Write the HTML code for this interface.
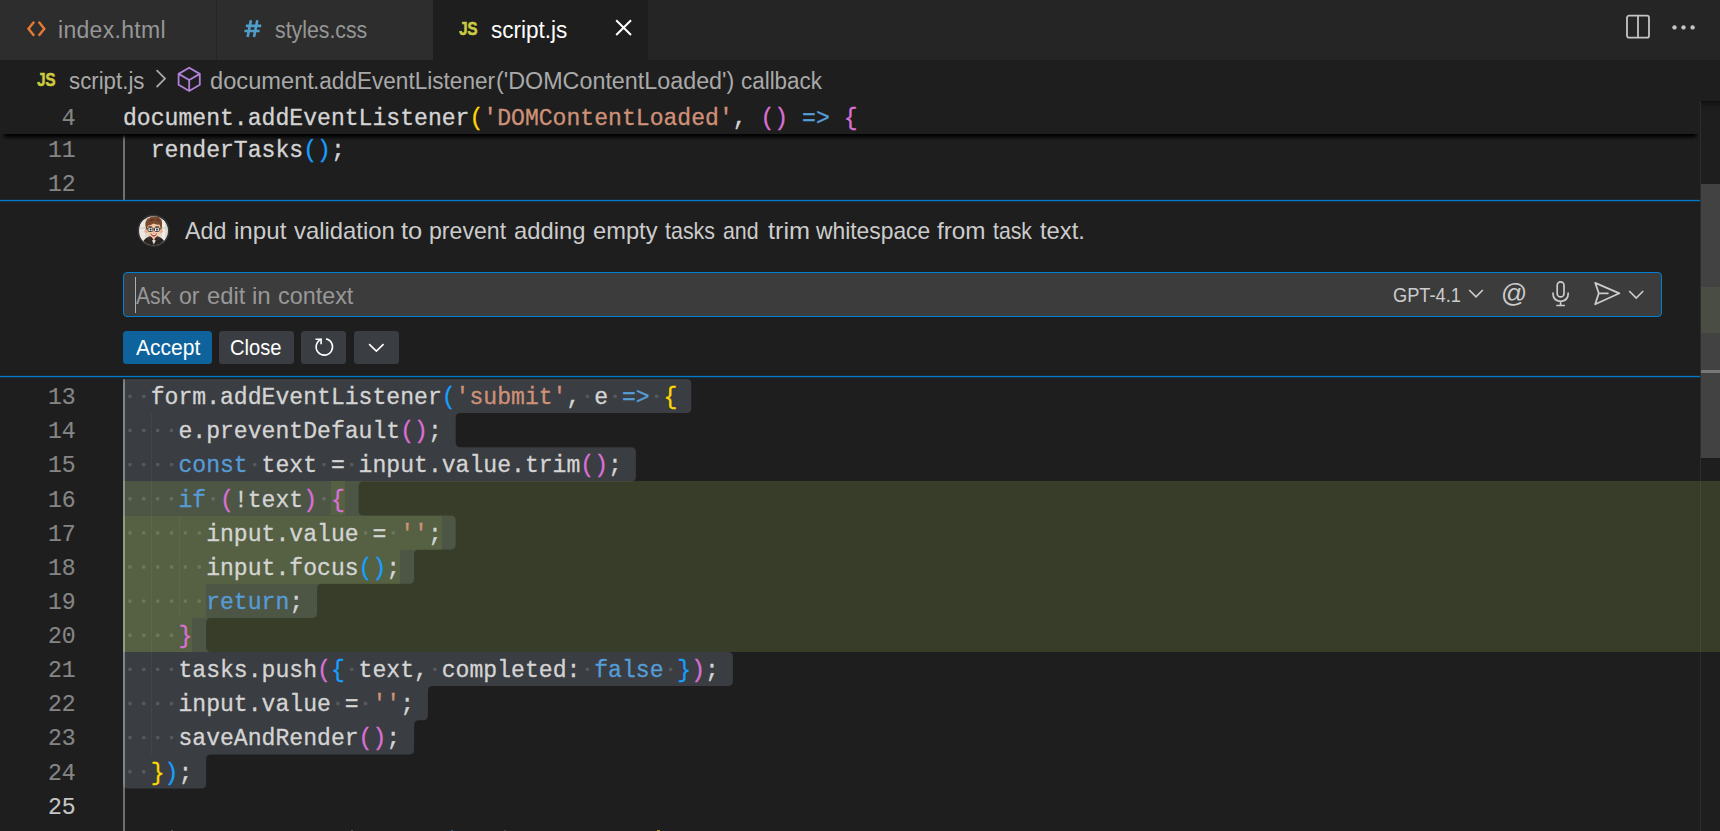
<!DOCTYPE html>
<html><head><meta charset="utf-8"><title>script.js</title>
<style>
*{box-sizing:border-box;margin:0;padding:0}
html,body{width:1720px;height:831px;overflow:hidden;background:#1e1e1e}
body{position:relative;font-family:"Liberation Sans",sans-serif;color:#ccc}
.abs{position:absolute}
/* tabs */
#tabbar{position:absolute;left:0;top:0;width:1720px;height:60px;background:#252526}
.tab{position:absolute;top:0;height:60px;background:#2d2d2d}
.tab .lbl{position:absolute;top:17px;font-size:23px;line-height:26px;color:#969696;white-space:nowrap}
#t1{left:0;width:216px}
#t2{left:217px;width:216px}
#t3{left:433px;width:215px;background:#1e1e1e}
#t3 .lbl{color:#fff}
.jsico{position:absolute;font-weight:bold;font-size:18.5px;line-height:20px;color:#cbcb41;-webkit-text-stroke:0.45px #cbcb41;transform:scaleX(0.84);transform-origin:0 0;letter-spacing:-0.5px}
.ui{font-size:23.2px;line-height:26px;white-space:nowrap}
.btn{top:131px;height:33px;border-radius:3.5px;background:#3a3d41}
/* breadcrumb */
#crumb{position:absolute;left:0;top:60px;width:1720px;height:40px;background:#1e1e1e}
#crumb .lbl{position:absolute;top:7.8px;font-size:23px;line-height:26px;color:#a9a9a9;white-space:nowrap}
/* editor */
.cl{position:absolute;left:123px;height:34.125px;line-height:34.125px;font-family:"Liberation Mono",monospace;font-size:23.1px;white-space:pre;color:#d4d4d4;padding-top:2.2px;-webkit-text-stroke:0.3px currentColor}
.ln{position:absolute;left:0;width:75.6px;text-align:right;height:34.125px;line-height:34.125px;font-family:"Liberation Mono",monospace;font-size:23.1px;color:#858585;padding-top:2.2px;-webkit-text-stroke:0.15px currentColor}
.ln.act{color:#c6c6c6}
#sticky{position:absolute;left:0;top:100px;width:1700px;height:34px;background:#1e1e1e;box-shadow:0 7px 3.5px -3.5px #000}
#zone{position:absolute;left:0;top:200px;width:1700px;height:178px;background:#1e1e1e}
</style></head>
<body>
<!-- editor lines above zone -->
<div id="upper" class="abs" style="left:0;top:100px;width:1700px;height:100px;overflow:hidden">
 <div class="abs" style="left:0;top:-100px;width:1700px;height:300px">
  <div class="ln" style="top:131.75px">11</div><div class="ln" style="top:165.88px">12</div><div class="cl" style="top:131.75px"><span style="color:#d4d4d4">  renderTasks</span><span style="color:#179fff">()</span><span style="color:#d4d4d4">;</span></div><div class="cl" style="top:165.88px"></div>
 </div>
</div>
<div class="abs" style="left:123px;top:134px;width:2px;height:66px;background:#707070"></div>

<!-- lower editor -->
<div id="lower" class="abs" style="left:0;top:377px;width:1720px;height:454px;overflow:hidden">
 <div class="abs" style="left:0;top:-377px;width:1720px;height:900px">
  <svg class="abs" style="left:0;top:0" width="1720" height="900"><path d="M123.00 384.00 Q123.00 379.00 128.00 379.00 L686.34 379.00 Q691.34 379.00 691.34 384.00 L691.34 408.12 Q691.34 413.12 686.34 413.12 L460.69 413.12 Q455.69 413.12 455.69 418.12 L455.69 442.25 Q455.69 447.25 460.69 447.25 L630.89 447.25 Q635.89 447.25 635.89 452.25 L635.89 476.38 Q635.89 481.38 630.89 481.38 L363.65 481.38 Q358.65 481.38 358.65 486.38 L358.65 510.50 Q358.65 515.50 363.65 515.50 L450.69 515.50 Q455.69 515.50 455.69 520.50 L455.69 544.62 Q455.69 549.62 450.69 549.62 L419.10 549.62 Q414.10 549.62 414.10 554.62 L414.10 578.75 Q414.10 583.75 409.10 583.75 L322.07 583.75 Q317.07 583.75 317.07 588.75 L317.07 612.88 Q317.07 617.88 312.07 617.88 L211.17 617.88 Q206.17 617.88 206.17 622.88 L206.17 647.00 Q206.17 652.00 211.17 652.00 L727.93 652.00 Q732.93 652.00 732.93 657.00 L732.93 681.12 Q732.93 686.12 727.93 686.12 L432.96 686.12 Q427.96 686.12 427.96 691.12 L427.96 715.25 Q427.96 720.25 422.96 720.25 L419.10 720.25 Q414.10 720.25 414.10 725.25 L414.10 749.38 Q414.10 754.38 409.10 754.38 L211.17 754.38 Q206.17 754.38 206.17 759.38 L206.17 783.50 Q206.17 788.50 201.17 788.50 L128.00 788.50 Q123.00 788.50 123.00 783.50 Z" fill="#3a3d41"/></svg>
  <div class="abs" style="left:123px;top:481.375px;width:1597px;height:170.625px;background:rgba(155,185,85,0.2)"></div>
  <div class="abs" style="left:330.93px;top:481.38px;width:13.86px;height:34.12px;background:rgba(156,204,44,0.11)"></div><div class="abs" style="left:123.00px;top:515.50px;width:318.83px;height:34.12px;background:rgba(156,204,44,0.11)"></div><div class="abs" style="left:123.00px;top:549.62px;width:277.24px;height:34.12px;background:rgba(156,204,44,0.11)"></div><div class="abs" style="left:123.00px;top:583.75px;width:83.17px;height:34.12px;background:rgba(156,204,44,0.11)"></div><div class="abs" style="left:123.00px;top:617.88px;width:69.31px;height:34.12px;background:rgba(156,204,44,0.11)"></div><div class="abs" style="left:151.32px;top:413.12px;width:1px;height:341.25px;background:rgba(255,255,255,0.045)"></div><div class="abs" style="left:179.05px;top:515.50px;width:1px;height:102.38px;background:rgba(255,255,255,0.045)"></div><svg class="abs" style="left:0;top:0" width="1720" height="900" fill="rgba(227,228,226,0.17)"><circle cx="129.93" cy="396.36" r="1.9"/><circle cx="143.79" cy="396.36" r="1.9"/><circle cx="587.38" cy="396.36" r="1.9"/><circle cx="615.10" cy="396.36" r="1.9"/><circle cx="656.69" cy="396.36" r="1.9"/><circle cx="129.93" cy="430.49" r="1.9"/><circle cx="143.79" cy="430.49" r="1.9"/><circle cx="157.66" cy="430.49" r="1.9"/><circle cx="171.52" cy="430.49" r="1.9"/><circle cx="129.93" cy="464.61" r="1.9"/><circle cx="143.79" cy="464.61" r="1.9"/><circle cx="157.66" cy="464.61" r="1.9"/><circle cx="171.52" cy="464.61" r="1.9"/><circle cx="254.69" cy="464.61" r="1.9"/><circle cx="324.00" cy="464.61" r="1.9"/><circle cx="351.72" cy="464.61" r="1.9"/><circle cx="129.93" cy="498.74" r="1.9"/><circle cx="143.79" cy="498.74" r="1.9"/><circle cx="157.66" cy="498.74" r="1.9"/><circle cx="171.52" cy="498.74" r="1.9"/><circle cx="213.10" cy="498.74" r="1.9"/><circle cx="324.00" cy="498.74" r="1.9"/><circle cx="129.93" cy="532.86" r="1.9"/><circle cx="143.79" cy="532.86" r="1.9"/><circle cx="157.66" cy="532.86" r="1.9"/><circle cx="171.52" cy="532.86" r="1.9"/><circle cx="185.38" cy="532.86" r="1.9"/><circle cx="199.24" cy="532.86" r="1.9"/><circle cx="365.59" cy="532.86" r="1.9"/><circle cx="393.31" cy="532.86" r="1.9"/><circle cx="129.93" cy="566.99" r="1.9"/><circle cx="143.79" cy="566.99" r="1.9"/><circle cx="157.66" cy="566.99" r="1.9"/><circle cx="171.52" cy="566.99" r="1.9"/><circle cx="185.38" cy="566.99" r="1.9"/><circle cx="199.24" cy="566.99" r="1.9"/><circle cx="129.93" cy="601.11" r="1.9"/><circle cx="143.79" cy="601.11" r="1.9"/><circle cx="157.66" cy="601.11" r="1.9"/><circle cx="171.52" cy="601.11" r="1.9"/><circle cx="185.38" cy="601.11" r="1.9"/><circle cx="199.24" cy="601.11" r="1.9"/><circle cx="129.93" cy="635.24" r="1.9"/><circle cx="143.79" cy="635.24" r="1.9"/><circle cx="157.66" cy="635.24" r="1.9"/><circle cx="171.52" cy="635.24" r="1.9"/><circle cx="129.93" cy="669.36" r="1.9"/><circle cx="143.79" cy="669.36" r="1.9"/><circle cx="157.66" cy="669.36" r="1.9"/><circle cx="171.52" cy="669.36" r="1.9"/><circle cx="351.72" cy="669.36" r="1.9"/><circle cx="434.89" cy="669.36" r="1.9"/><circle cx="587.38" cy="669.36" r="1.9"/><circle cx="670.55" cy="669.36" r="1.9"/><circle cx="129.93" cy="703.49" r="1.9"/><circle cx="143.79" cy="703.49" r="1.9"/><circle cx="157.66" cy="703.49" r="1.9"/><circle cx="171.52" cy="703.49" r="1.9"/><circle cx="337.86" cy="703.49" r="1.9"/><circle cx="365.59" cy="703.49" r="1.9"/><circle cx="129.93" cy="737.61" r="1.9"/><circle cx="143.79" cy="737.61" r="1.9"/><circle cx="157.66" cy="737.61" r="1.9"/><circle cx="171.52" cy="737.61" r="1.9"/><circle cx="129.93" cy="771.74" r="1.9"/><circle cx="143.79" cy="771.74" r="1.9"/></svg>
  <div class="abs" style="left:123px;top:379px;width:2px;height:460px;background:rgba(255,255,255,0.36)"></div>
  <div class="ln" style="top:379.00px">13</div><div class="ln" style="top:413.12px">14</div><div class="ln" style="top:447.25px">15</div><div class="ln" style="top:481.38px">16</div><div class="ln" style="top:515.50px">17</div><div class="ln" style="top:549.62px">18</div><div class="ln" style="top:583.75px">19</div><div class="ln" style="top:617.88px">20</div><div class="ln" style="top:652.00px">21</div><div class="ln" style="top:686.12px">22</div><div class="ln" style="top:720.25px">23</div><div class="ln" style="top:754.38px">24</div><div class="ln act" style="top:788.50px">25</div><div class="cl" style="top:379.00px"><span style="color:#d4d4d4">  form.addEventListener</span><span style="color:#179fff">(</span><span style="color:#ce9178">'submit'</span><span style="color:#d4d4d4">, e </span><span style="color:#569cd6">=&gt;</span><span style="color:#d4d4d4"> </span><span style="color:#ffd700">{</span></div><div class="cl" style="top:413.12px"><span style="color:#d4d4d4">    e.preventDefault</span><span style="color:#da70d6">()</span><span style="color:#d4d4d4">;</span></div><div class="cl" style="top:447.25px"><span style="color:#d4d4d4">    </span><span style="color:#569cd6">const</span><span style="color:#d4d4d4"> text = input.value.trim</span><span style="color:#da70d6">()</span><span style="color:#d4d4d4">;</span></div><div class="cl" style="top:481.38px"><span style="color:#d4d4d4">    </span><span style="color:#569cd6">if</span><span style="color:#d4d4d4"> </span><span style="color:#da70d6">(</span><span style="color:#d4d4d4">!text</span><span style="color:#da70d6">)</span><span style="color:#d4d4d4"> </span><span style="color:#da70d6">{</span></div><div class="cl" style="top:515.50px"><span style="color:#d4d4d4">      input.value = </span><span style="color:#ce9178">''</span><span style="color:#d4d4d4">;</span></div><div class="cl" style="top:549.62px"><span style="color:#d4d4d4">      input.focus</span><span style="color:#179fff">()</span><span style="color:#d4d4d4">;</span></div><div class="cl" style="top:583.75px"><span style="color:#d4d4d4">      </span><span style="color:#569cd6">return</span><span style="color:#d4d4d4">;</span></div><div class="cl" style="top:617.88px"><span style="color:#d4d4d4">    </span><span style="color:#da70d6">}</span></div><div class="cl" style="top:652.00px"><span style="color:#d4d4d4">    tasks.push</span><span style="color:#da70d6">(</span><span style="color:#179fff">{</span><span style="color:#d4d4d4"> text, completed: </span><span style="color:#569cd6">false</span><span style="color:#d4d4d4"> </span><span style="color:#179fff">}</span><span style="color:#da70d6">)</span><span style="color:#d4d4d4">;</span></div><div class="cl" style="top:686.12px"><span style="color:#d4d4d4">    input.value = </span><span style="color:#ce9178">''</span><span style="color:#d4d4d4">;</span></div><div class="cl" style="top:720.25px"><span style="color:#d4d4d4">    saveAndRender</span><span style="color:#da70d6">()</span><span style="color:#d4d4d4">;</span></div><div class="cl" style="top:754.38px"><span style="color:#d4d4d4">  </span><span style="color:#ffd700">}</span><span style="color:#179fff">)</span><span style="color:#d4d4d4">;</span></div><div class="cl" style="top:788.50px"></div>
  <div class="abs" style="left:170.6px;top:830px;width:2px;height:1px;background:rgba(212,212,212,0.28)"></div><div class="abs" style="left:350.7px;top:830px;width:2px;height:1px;background:rgba(212,212,212,0.28)"></div><div class="abs" style="left:504.2px;top:830px;width:2px;height:1px;background:rgba(212,212,212,0.22)"></div><div class="abs" style="left:450.6px;top:829.5px;width:2px;height:1.5px;background:rgba(23,159,255,0.6)"></div><div class="abs" style="left:657.2px;top:829.5px;width:3px;height:1.5px;background:rgba(255,215,0,0.6)"></div>
 </div>
</div>

<!-- sticky -->
<div id="sticky">
 <div class="abs" style="left:0;top:-100px;width:1700px;height:200px"><div class="ln" style="top:100.00px">4</div><div class="cl" style="top:100.00px"><span style="color:#d4d4d4">document.addEventListener</span><span style="color:#ffd700">(</span><span style="color:#ce9178">'DOMContentLoaded'</span><span style="color:#d4d4d4">, </span><span style="color:#da70d6">()</span><span style="color:#d4d4d4"> </span><span style="color:#569cd6">=&gt;</span><span style="color:#d4d4d4"> </span><span style="color:#da70d6">{</span></div></div>
</div>

<!-- zone -->
<div id="zone">
 <div class="abs" style="left:0;top:-1px;width:1700px;height:1px;background:rgba(0,122,204,0.12)"></div>
 <div class="abs" style="left:0;top:0;width:1700px;height:1px;background:#007acc"></div>
 <div class="abs" style="left:0;top:1px;width:1700px;height:1px;background:rgba(0,122,204,0.22)"></div>
 <div class="abs" style="left:0;top:175px;width:1700px;height:1px;background:rgba(0,122,204,0.12)"></div>
 <div class="abs" style="left:0;top:176px;width:1700px;height:1px;background:#007acc"></div>
 <div class="abs" style="left:0;top:177px;width:1700px;height:1px;background:rgba(0,122,204,0.22)"></div>
 <!-- avatar -->
 <svg class="abs" style="left:137px;top:14px" width="34" height="34" viewBox="0 0 34 34">
  <defs><clipPath id="avc"><circle cx="16.5" cy="16.7" r="14.5"/></clipPath></defs>
  <circle cx="16.5" cy="16.7" r="16.1" fill="#353535"/>
  <g clip-path="url(#avc)">
   <rect x="0" y="0" width="34" height="34" fill="#dedbd1"/>
   <rect x="3" y="0" width="5" height="34" fill="#ebe9e1"/><rect x="25" y="0" width="3" height="34" fill="#efede6"/><rect x="0" y="13.5" width="34" height="1.2" fill="#cfccc2"/>
   <path d="M4.5 33 Q5.5 24.5 12 23 L14.5 21.6 L19 21.6 L21.6 23 Q28 24.5 29 33 Z" fill="#2a221f"/>
   <path d="M9.5 24.5 Q12 21.6 14.4 22.4 L13 27 Z M24 24.5 Q21.4 21.6 19 22.4 L20.4 27 Z" fill="#3a302b"/>
   <path d="M13.6 21.4 L16.8 26.6 L20 21.4 Z" fill="#e6b391"/>
   <path d="M15 26.6 L16.8 30.6 L18.8 26.6 L16.8 25.4 Z" fill="#d9d9d9"/>
   <ellipse cx="9.3" cy="17.2" rx="1.7" ry="2.1" fill="#e8b090"/><ellipse cx="24.1" cy="17.2" rx="1.7" ry="2.1" fill="#e8b090"/>
   <path d="M10.2 13 Q10.2 8.4 16.7 8.4 Q23.2 8.4 23.2 13 L23.2 17.4 Q23.2 22.4 16.7 23.4 Q10.2 22.4 10.2 17.4 Z" fill="#f3c9a8"/>
   <path d="M9.6 16.4 Q7.2 9.4 9.4 6.4 Q10 4.2 12.6 4 Q13.8 2 16.8 2.6 Q19 1.4 21 3 L22.6 1.6 L22.8 4.2 Q25.6 6 25 10 Q25.4 13.6 23.8 16.4 Q23.6 12.4 22.4 10.6 Q19.4 11.2 16.6 9.6 Q13.4 12 11.2 11.2 Q10 13.4 9.6 16.4 Z" fill="#7a4a2f"/>
   <path d="M12.4 6.4 Q15 4.4 18.4 5.4 Q15.6 5.6 14 7.4 Z M19.6 4.6 Q22.4 5.6 23.2 8.6 Q21.6 6.6 19.6 6 Z" fill="#5b331e"/>
   <path d="M11 12.9 Q13 12 15.2 12.9 M18.2 12.9 Q20.4 12 22.4 12.9" stroke="#5b331e" stroke-width="0.8" fill="none"/>
   <rect x="11" y="13.6" width="4.9" height="3.9" rx="1.1" fill="#f7efe6" stroke="#2b2724" stroke-width="0.8"/>
   <rect x="17.5" y="13.6" width="4.9" height="3.9" rx="1.1" fill="#f7efe6" stroke="#2b2724" stroke-width="0.8"/>
   <path d="M15.9 15 H17.5 M11 14.8 L9.6 14.4 M22.4 14.8 L23.8 14.4" stroke="#2b2724" stroke-width="0.8"/>
   <circle cx="13.6" cy="15.6" r="1.05" fill="#23364a"/><circle cx="20" cy="15.6" r="1.05" fill="#23364a"/>
   <path d="M16.2 17.6 Q16.7 18.6 17.4 17.6" stroke="#d99a7c" stroke-width="0.7" fill="none"/>
   <path d="M13.4 19.2 Q16.7 20.2 20 19.2 Q19 22.4 16.7 22.4 Q14.4 22.4 13.4 19.2 Z" fill="#a8443a"/>
   <path d="M14 19.5 Q16.7 20.3 19.4 19.5 Q19 20.9 16.7 20.9 Q14.4 20.9 14 19.5 Z" fill="#fff"/>
  </g>
 </svg>
 <!--msg-->
 <!-- input -->
 <div class="abs" style="left:123px;top:72.4px;width:1539px;height:44.6px;background:#3c3c3c;border:1.6px solid #007fd4;border-radius:4px"></div>
 <div class="abs" style="left:134.6px;top:77px;width:1.6px;height:35.6px;background:#aeafad"></div>
 <!--ph-->
 <span class="abs" style="left:1393px;top:84.8px;font-size:19.3px;line-height:22px;color:#ccc;white-space:nowrap;transform:scaleX(0.945);transform-origin:0 0" id="gpt">GPT-4.1</span>
 <svg class="abs" style="left:1466px;top:86px" width="20" height="14" viewBox="0 0 20 14"><path d="M3.2 4 L10 10.8 L16.8 4" fill="none" stroke="#ccc" stroke-width="1.7"/></svg>
 <span class="abs" style="left:1501px;top:77.6px;font-size:26.4px;line-height:30px;color:#ccc;transform:scaleX(0.98);transform-origin:0 0" id="at">@</span>
 <!-- mic -->
 <svg class="abs" style="left:1548px;top:79px" width="26" height="30" viewBox="0 0 26 30"><rect x="9.2" y="2.8" width="6.8" height="15" rx="3.4" fill="none" stroke="#ccc" stroke-width="1.7"/><path d="M4.9 13.6 Q4.9 22.3 12.6 22.3 Q20.3 22.3 20.3 13.6 M12.6 22.3 V26.4 M8.3 26.5 H16.9" fill="none" stroke="#ccc" stroke-width="1.7"/></svg>
 <!-- send -->
 <svg class="abs" style="left:1591px;top:79px" width="32" height="30" viewBox="0 0 32 30"><path d="M4.2 3.8 L28.4 14.3 L4.2 25.2 L7.8 14.3 Z M7.8 14.3 H17.6" fill="none" stroke="#ccc" stroke-width="1.8" stroke-linejoin="round"/></svg>
 <svg class="abs" style="left:1626px;top:87px" width="20" height="14" viewBox="0 0 20 14"><path d="M3.2 4 L10.2 11 L17.2 4" fill="none" stroke="#ccc" stroke-width="1.7"/></svg>
 <!-- buttons -->
 <div class="abs btn" style="left:123px;width:89px;background:#0e639c"><span class="abs ui" style="left:12.6px;top:3.6px;color:#fff;font-size:22px;transform:scaleX(0.955);transform-origin:0 0" id="acc">Accept</span></div>
 <div class="abs btn" style="left:219px;width:75px"><span class="abs ui" style="left:11.4px;top:3.6px;color:#fff;font-size:22px;transform:scaleX(0.915);transform-origin:0 0" id="clo">Close</span></div>
 <div class="abs btn" style="left:301px;width:45px"><svg class="abs" style="left:11px;top:5px" width="24" height="24" viewBox="0 0 24 24"><path d="M14.1 2.9 A 8.2 8.2 0 1 1 9.3 3.3" fill="none" stroke="#fff" stroke-width="1.6"/><path d="M3.5 3.2 H9.9 M9.1 2.4 V8.2" fill="none" stroke="#fff" stroke-width="1.6"/></svg></div>
 <div class="abs btn" style="left:354px;width:45px"><svg class="abs" style="left:13px;top:10px" width="20" height="14" viewBox="0 0 20 14"><path d="M2.1 3.2 L9.35 10.1 L16.6 3.2" fill="none" stroke="#fff" stroke-width="1.6"/></svg></div>
</div>

<!-- tab bar -->
<div id="tabbar">
 <div class="tab" id="t1">
  <svg class="abs" style="left:26px;top:19px" width="22" height="20" viewBox="0 0 22 20"><path d="M8.1 2.8 L2.5 9.8 L8.1 16.8 M12.7 2.8 L18.3 9.8 L12.7 16.8" fill="none" stroke="#e37933" stroke-width="2.5"/></svg>
  <span class="lbl" style="left:58px;letter-spacing:0.3px">index.html</span></div>
 <div class="tab" id="t2">
  <svg class="abs" style="left:26px;top:19px" width="20" height="20" viewBox="0 0 20 20"><path d="M7.9 1.2 L4.6 18 M14.3 1.2 L11 18 M2.9 6.9 H18.2 M1.4 12 H16.6" fill="none" stroke="#4f9fc9" stroke-width="2.6"/></svg>
  <span class="lbl" style="left:58px;transform:scaleX(0.925);transform-origin:0 0">styles.css</span></div>
 <div class="tab" id="t3">
  <span class="jsico" style="left:26px;top:19px">JS</span>
  <span class="lbl" style="left:58px;transform:scaleX(0.98);transform-origin:0 0">script.js</span>
  <svg class="abs" style="left:180px;top:17px" width="22" height="22" viewBox="0 0 22 22"><path d="M3.2 3.2 L18 18 M18 3.2 L3.2 18" fill="none" stroke="#fff" stroke-width="2"/></svg>
 </div>
 <!-- split editor -->
 <svg class="abs" style="left:1624px;top:13px" width="28" height="28" viewBox="0 0 28 28"><rect x="3" y="2.7" width="22" height="22" rx="2" fill="none" stroke="#c5c5c5" stroke-width="1.8"/><path d="M14 2.7 V24.7" stroke="#c5c5c5" stroke-width="1.8"/></svg>
 <svg class="abs" style="left:1668px;top:22px" width="32" height="12" viewBox="0 0 32 12" fill="#c5c5c5"><circle cx="6.5" cy="5.4" r="2.2"/><circle cx="15.5" cy="5.4" r="2.2"/><circle cx="24.6" cy="5.4" r="2.2"/></svg>
</div>
<div id="crumb">
 <span class="jsico" style="left:37px;top:10px">JS</span>
 <span class="lbl" style="left:69px;transform:scaleX(0.968);transform-origin:0 0">script.js</span>
 <svg class="abs" style="left:152px;top:8px" width="18" height="22" viewBox="0 0 18 22"><path d="M4.6 2.2 L13 10.6 L4.6 19" fill="none" stroke="#a9a9a9" stroke-width="1.8"/></svg>
 <svg class="abs" style="left:175px;top:4px" width="28" height="30" viewBox="0 0 28 30"><path d="M14.2 3.7 L24.8 9.9 V20.8 L14.2 27 L3.6 20.8 V9.9 Z M3.6 9.9 L14.2 16 L24.8 9.9 M14.2 16 V27" fill="none" stroke="#b180d7" stroke-width="1.8" stroke-linejoin="round"/></svg>
 <!--crumbdoc-->
</div>

<!-- scrollbar -->
<div class="abs" style="left:1700px;top:101px;width:20px;height:730px;border-left:1px solid rgba(127,127,127,0.16);box-shadow:inset 0 10px 9px -10px #000"></div>
<div class="abs" style="left:1701px;top:184px;width:19px;height:274px;background:rgba(121,121,121,0.4)"></div>
<div class="abs" style="left:1701px;top:287px;width:19px;height:45.5px;background:rgba(155,185,85,0.09)"></div>
<div class="abs" style="left:1701px;top:370.4px;width:19px;height:2.6px;background:#787878"></div>
<span class="abs" style="left:184.70px;top:217.80px;font-size:23.20px;line-height:26px;white-space:nowrap;color:#ccc;transform:scaleX(1.0009);transform-origin:0 0;">Add</span><span class="abs" style="left:233.76px;top:217.80px;font-size:23.20px;line-height:26px;white-space:nowrap;color:#ccc;transform:scaleX(1.0414);transform-origin:0 0;">input</span><span class="abs" style="left:293.70px;top:217.80px;font-size:23.20px;line-height:26px;white-space:nowrap;color:#ccc;transform:scaleX(1.0291);transform-origin:0 0;">validation</span><span class="abs" style="left:401.00px;top:217.80px;font-size:23.20px;line-height:26px;white-space:nowrap;color:#ccc;transform:scaleX(1.1007);transform-origin:0 0;">to</span><span class="abs" style="left:429.00px;top:217.80px;font-size:23.20px;line-height:26px;white-space:nowrap;color:#ccc;transform:scaleX(0.9974);transform-origin:0 0;">prevent</span><span class="abs" style="left:514.40px;top:217.80px;font-size:23.20px;line-height:26px;white-space:nowrap;color:#ccc;transform:scaleX(1.0257);transform-origin:0 0;">adding</span><span class="abs" style="left:593.00px;top:217.80px;font-size:23.20px;line-height:26px;white-space:nowrap;color:#ccc;transform:scaleX(1.0213);transform-origin:0 0;">empty</span><span class="abs" style="left:665.20px;top:217.80px;font-size:23.20px;line-height:26px;white-space:nowrap;color:#ccc;transform:scaleX(0.9248);transform-origin:0 0;">tasks</span><span class="abs" style="left:722.70px;top:217.80px;font-size:23.20px;line-height:26px;white-space:nowrap;color:#ccc;transform:scaleX(0.9208);transform-origin:0 0;">and</span><span class="abs" style="left:767.50px;top:217.80px;font-size:23.20px;line-height:26px;white-space:nowrap;color:#ccc;transform:scaleX(1.0880);transform-origin:0 0;">trim</span><span class="abs" style="left:816.48px;top:217.80px;font-size:23.20px;line-height:26px;white-space:nowrap;color:#ccc;transform:scaleX(0.9844);transform-origin:0 0;">whitespace</span><span class="abs" style="left:937.40px;top:217.80px;font-size:23.20px;line-height:26px;white-space:nowrap;color:#ccc;transform:scaleX(1.0475);transform-origin:0 0;">from</span><span class="abs" style="left:992.50px;top:217.80px;font-size:23.20px;line-height:26px;white-space:nowrap;color:#ccc;transform:scaleX(0.9154);transform-origin:0 0;">task</span><span class="abs" style="left:1039.70px;top:217.80px;font-size:23.20px;line-height:26px;white-space:nowrap;color:#ccc;transform:scaleX(1.0266);transform-origin:0 0;">text.</span>
<span class="abs" style="left:135.70px;top:282.50px;font-size:23.20px;line-height:26px;white-space:nowrap;color:#989898;transform:scaleX(0.9089);transform-origin:0 0;">Ask</span><span class="abs" style="left:178.90px;top:282.50px;font-size:23.20px;line-height:26px;white-space:nowrap;color:#989898;transform:scaleX(0.9954);transform-origin:0 0;">or</span><span class="abs" style="left:206.80px;top:282.50px;font-size:23.20px;line-height:26px;white-space:nowrap;color:#989898;transform:scaleX(1.0252);transform-origin:0 0;">edit</span><span class="abs" style="left:252.26px;top:282.50px;font-size:23.20px;line-height:26px;white-space:nowrap;color:#989898;transform:scaleX(1.0401);transform-origin:0 0;">in</span><span class="abs" style="left:278.40px;top:282.50px;font-size:23.20px;line-height:26px;white-space:nowrap;color:#989898;transform:scaleX(1.0077);transform-origin:0 0;">context</span>
<span class="abs" style="left:209.70px;top:67.80px;font-size:23.00px;line-height:26px;white-space:nowrap;color:#a9a9a9;transform:scaleX(1.0284);transform-origin:0 0;">document</span><span class="abs" style="left:312.94px;top:67.80px;font-size:23.00px;line-height:26px;white-space:nowrap;color:#a9a9a9;transform:scaleX(0.9818);transform-origin:0 0;">.addEventListener</span><span class="abs" style="left:495.69px;top:67.80px;font-size:23.00px;line-height:26px;white-space:nowrap;color:#a9a9a9;transform:scaleX(1.0137);transform-origin:0 0;">('DOMContentLoaded')</span><span class="abs" style="left:741.40px;top:67.80px;font-size:23.00px;line-height:26px;white-space:nowrap;color:#a9a9a9;transform:scaleX(0.9738);transform-origin:0 0;">callback</span>
</body></html>
